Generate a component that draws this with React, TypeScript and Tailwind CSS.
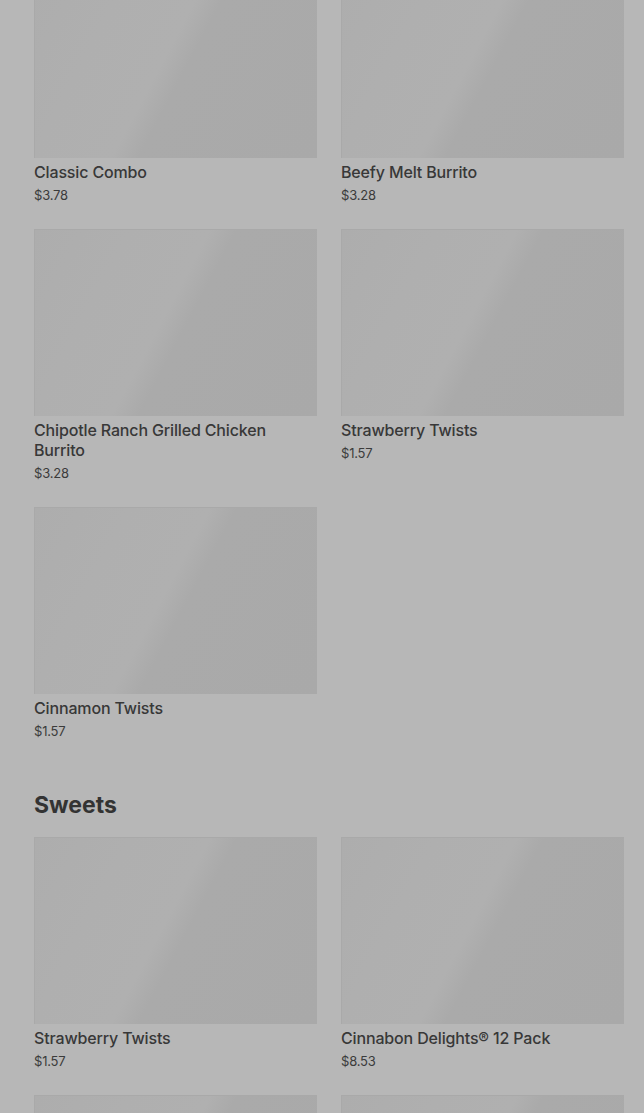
import React from "react";

interface IMenuItem {
  name: string;
  price: string;
}

const topItems: IMenuItem[] = [
  { name: "Classic Combo", price: "$3.78" },
  { name: "Beefy Melt Burrito", price: "$3.28" },
  { name: "Chipotle Ranch Grilled Chicken Burrito", price: "$3.28" },
  { name: "Strawberry Twists", price: "$1.57" },
  { name: "Cinnamon Twists", price: "$1.57" },
];

const sweets: IMenuItem[] = [
  { name: "Strawberry Twists", price: "$1.57" },
  { name: "Cinnabon Delights® 12 Pack", price: "$8.53" },
  { name: "Cinnamon Twists", price: "$1.57" },
  { name: "Cinnabon Delights® 2 Pack", price: "$2.39" },
];

const ItemCard: React.FC<{ item: IMenuItem }> = ({ item }) => {
  return (
    <div className="flex flex-col">
      {/* skeleton picture */}
      <div className="h-[187px] w-full border-l border-t border-[#a9a9a9] bg-[linear-gradient(118deg,#adadad_0%,#afafaf_25%,#b0b0b0_46%,#aaaaaa_53%,#a9a9a9_100%)]" />
      <div className="mt-1 text-base leading-5 font-medium tracking-[-0.15px] text-[#383838]">
        {item.name}
      </div>
      <div className="mt-[3px] text-[13px] leading-5 tracking-[-0.2px] text-[#3b3b3b]">
        {item.price}
      </div>
    </div>
  );
};

export default function App() {
  return (
    <div
      className="h-[1113px] w-full overflow-hidden bg-[#b7b7b7] pr-5 pl-[34px]"
      style={{ fontFamily: "Inter, 'Liberation Sans', sans-serif" }}
    >
      <div className="-mt-[29px]">
        <div className="grid grid-cols-2 gap-6">
          {topItems.map((item, i) => (
            <ItemCard key={i} item={item} />
          ))}
        </div>

        <h2 className="mt-12 mb-4 text-[23px] leading-8 font-bold text-[#333333]">
          Sweets
        </h2>
        <div className="grid grid-cols-2 gap-6">
          {sweets.map((item, i) => (
            <ItemCard key={i} item={item} />
          ))}
        </div>
      </div>
    </div>
  );
}
